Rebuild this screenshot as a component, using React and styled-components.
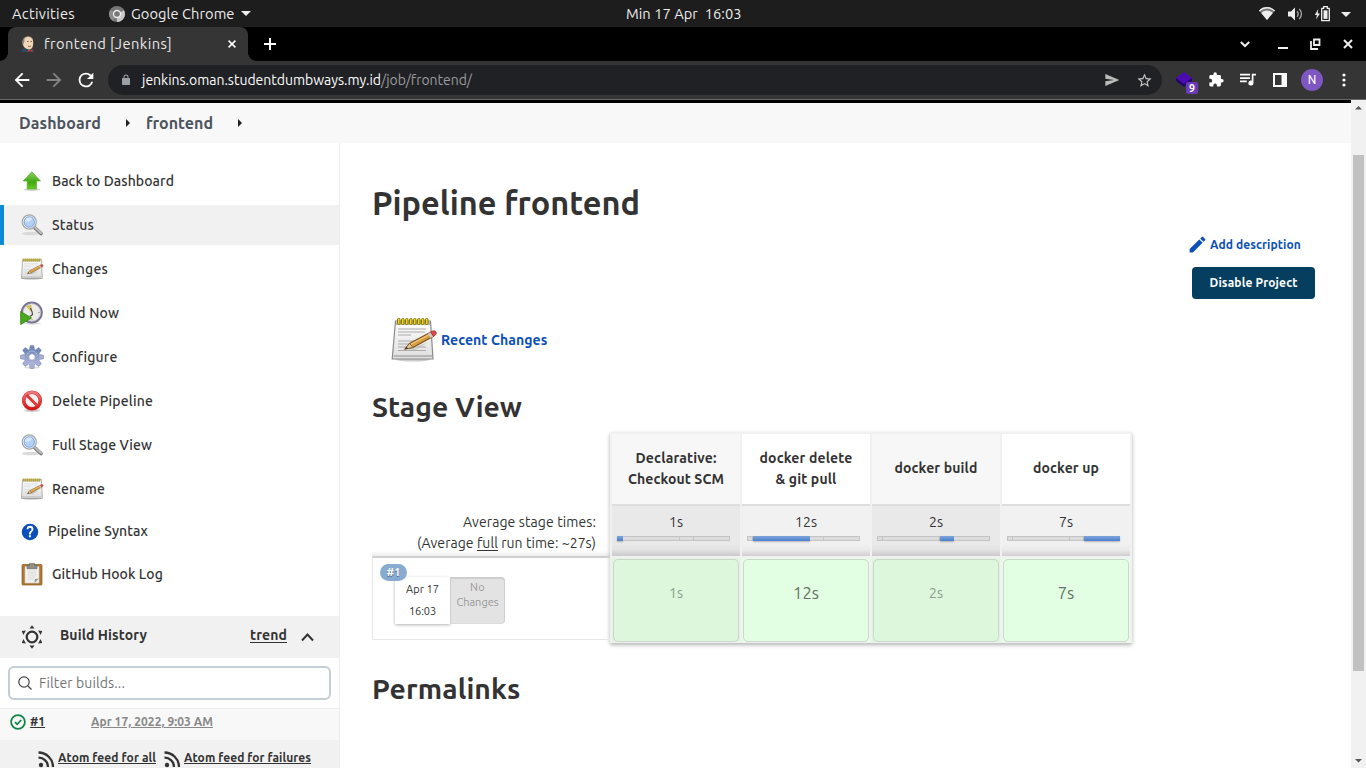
import React, { useLayoutEffect, useRef, useState } from "react";
import styled, { createGlobalStyle, css } from "styled-components";

const Global = createGlobalStyle`
  * { box-sizing: border-box; }
  body { margin: 0; background: #fff; overflow: hidden; font-family: "Ubuntu", "Noto Sans", "Open Sans", sans-serif; color: #333; }
  svg { display: block; flex: none; }
  h1, h2, p { margin: 0; }
`;

/* ---------- text fitted to a fixed measure ---------- */
const FitSpan = styled.span`
  white-space: pre;
`;

function Fit({ w, children, className }) {
  const ref = useRef(null);
  const [spacing, setSpacing] = useState(0);
  useLayoutEffect(() => {
    const el = ref.current;
    setSpacing((w - el.getBoundingClientRect().width) / el.textContent.length);
  }, [w]);
  return (
    <FitSpan ref={ref} className={className} style={{ letterSpacing: `${spacing}px` }}>
      {children}
    </FitSpan>
  );
}

/* ---------- desktop bar ---------- */
const Screen = styled.div`
  width: 1366px;
  height: 768px;
  display: flex;
  flex-direction: column;
  overflow: hidden;
`;
const DesktopBar = styled.div`
  height: 27px;
  flex: none;
  background: #1d1d1d;
  color: #ececec;
  font-size: 14.67px;
  line-height: 27px;
  display: grid;
  grid-template-columns: 626px 1fr auto;
`;
const DesktopLeft = styled.div`
  display: flex;
  align-items: center;
  padding-left: 12px;
`;
const AppMenu = styled.div`
  display: flex;
  align-items: center;
  margin-left: 34px;
  gap: 6px;
`;
const Tray = styled.div`
  display: flex;
  align-items: center;
  padding-right: 15px;
`;

/* ---------- browser chrome ---------- */
const TabStrip = styled.div`
  height: 34px;
  flex: none;
  background: #000;
  display: flex;
  padding-left: 8px;
`;
const Tab = styled.div`
  width: 240px;
  background: #353535;
  border-radius: 8px 8px 0 0;
  display: flex;
  align-items: center;
  padding: 0 12px;
  color: #e8e8e8;
  font-size: 14.67px;
  position: relative;
  &::before, &::after {
    content: "";
    position: absolute;
    bottom: 0;
    width: 8px;
    height: 8px;
  }
  &::before { left: -8px; background: radial-gradient(circle at 0 0, #000 7.5px, #353535 8px); }
  &::after { right: -8px; background: radial-gradient(circle at 100% 0, #000 7.5px, #353535 8px); }
`;
const TabTitle = styled.div`
  margin-left: 8px;
  padding-bottom: 1px;
  flex: 1;
`;
const WindowControls = styled.div`
  display: flex;
  align-items: center;
  margin-left: auto;
  padding-right: 12px;
`;
const NewTab = styled.div`
  display: flex;
  align-items: center;
  margin-left: 15px;
`;
const Toolbar = styled.div`
  height: 39px;
  flex: none;
  background: #353535;
  border-bottom: 1px solid #66686a;
  display: flex;
  align-items: center;
  padding-left: 11px;
`;
const NavButtons = styled.div`
  display: flex;
  gap: 10px;
  width: 97px;
`;
const AddressBar = styled.div`
  width: 1054px;
  height: 30px;
  border-radius: 15px;
  background: #202124;
  display: flex;
  align-items: center;
  padding: 0 9px 0 12px;
  font-size: 14px;
  color: #fff;
`;
const UrlText = styled.div`
  margin-left: 10px;
  flex: 1;
  display: flex;
`;
const UrlPath = styled.span`
  color: #9a9b9d;
`;
const BarIcons = styled.div`
  display: flex;
  gap: 16px;
`;
const Extensions = styled.div`
  display: flex;
  align-items: center;
  margin-left: 14px;
`;
const LayersExtension = styled.div`
  position: relative;
  width: 22px;
  height: 24px;
  padding-top: 2px;
`;
const ExtensionBadge = styled.span`
  position: absolute;
  left: 10px;
  top: 14px;
  width: 12px;
  height: 12px;
  border-radius: 2px;
  background: #6a3ab8;
  color: #fff;
  font-size: 10.5px;
  font-weight: 700;
  line-height: 12px;
  text-align: center;
`;
const Avatar = styled.div`
  width: 22px;
  height: 22px;
  border-radius: 50%;
  background: #7e57c2;
  color: #fff;
  font: 12px/22px Roboto, sans-serif;
  text-align: center;
  margin: 0 19px 0 14px;
`;

/* ---------- page frame ---------- */
const Viewport = styled.div`
  flex: 1;
  min-height: 0;
  display: flex;
`;
const Page = styled.div`
  width: 1351px;
  display: flex;
  flex-direction: column;
  background: #fff;
`;
const Scrollbar = styled.div`
  width: 15px;
  background: #f1f1f1;
  display: flex;
  flex-direction: column;
  align-items: center;
`;
const Thumb = styled.div`
  margin-top: 40px;
  width: 11px;
  height: 516px;
  background: #c1c1c1;
`;
const ScrollArrow = styled.svg`
  height: 15px;
  width: 15px;
  margin-top: ${(p) => (p.$last ? "auto" : 0)};
`;
const Breadcrumbs = styled.nav`
  border-top: 3px solid #000;
  height: 43px;
  flex: none;
  background: #f8f8f8;
  display: flex;
  align-items: center;
  padding-left: 19px;
  font-size: 16px;
  font-weight: 700;
  color: #4d545d;
`;
const CrumbArrow = styled.span`
  width: 0;
  height: 0;
  border: 4px solid transparent;
  border-left-color: #222;
  border-right: 0;
  margin: 0 16px 0 25px;
`;
const Columns = styled.div`
  flex: 1;
  min-height: 0;
  display: flex;
`;

/* ---------- sidebar ---------- */
const Sidebar = styled.aside`
  width: 340px;
  border-right: 1px solid #ededed;
  display: flex;
  flex-direction: column;
`;
const Tasks = styled.div`
  display: flex;
  flex-direction: column;
  gap: 4px;
  padding-top: 18px;
  height: 473px;
`;
const Task = styled.a`
  height: ${(p) => (p.$short ? 37 : 40)}px;
  flex: none;
  display: flex;
  align-items: center;
  gap: ${(p) => (p.$short ? 9 : 8)}px;
  padding-left: ${(p) => (p.$short ? 21 : 20)}px;
  font-size: 14px;
  line-height: 16px;
  font-weight: 500;
  color: #333;
  span { margin-bottom: ${(p) => (p.$short ? 2 : 0)}px; }
  ${(p) =>
    p.$active &&
    css`
      background: #f1f1f1;
      border-left: 4px solid #0b8ad6;
      padding-left: 16px;
    `}
`;
const HistoryHeader = styled.div`
  height: 42px;
  background: #f1f1f1;
  display: flex;
  align-items: center;
  padding: 0 25px 4px 20px;
  font-size: 14px;
  font-weight: 700;
  svg { margin-top: 4px; }
`;
const HistoryTitle = styled.div`
  margin-left: 16px;
  flex: 1;
`;
const TrendLink = styled.a`
  text-decoration: underline;
  text-underline-offset: 2px;
  margin-right: 14px;
`;
const FilterBox = styled.div`
  height: 34px;
  margin: 8px 8px 8px;
  border: 2px solid #c3cdd2;
  border-radius: 6px;
  display: flex;
  align-items: center;
  padding-left: 8px;
  gap: 7px;
  font-size: 14px;
  color: #757575;
`;
const BuildRow = styled.div`
  height: 32px;
  background: #f8f8f8;
  border-top: 1px solid #efefef;
  display: flex;
  align-items: center;
  padding: 0 0 6px 10px;
  font-size: 12px;
  font-weight: 700;
`;
const BuildNumber = styled.a`
  text-decoration: underline;
  margin-left: 4px;
  width: 61px;
`;
const BuildDate = styled.a`
  text-decoration: underline;
  color: #888;
`;
const Feeds = styled.div`
  flex: 1;
  background: #f1f1f1;
  display: flex;
  padding: 9px 0 0 38px;
  font-size: 12px;
  line-height: 18px;
  font-weight: 700;
`;
const Feed = styled.a`
  display: flex;
  gap: 3px;
  margin-right: 8px;
  text-decoration: underline;
  svg { margin-top: 2px; }
`;

/* ---------- main column ---------- */
const Main = styled.main`
  flex: 1;
  padding: 38px 36px 0 32px;
`;
const Title = styled.h1`
  font-size: 32.5px;
  line-height: 44px;
  font-weight: 700;
`;
const SubTitle = styled.h2`
  font-size: 28.3px;
  line-height: 38px;
  font-weight: 700;
`;
const Actions = styled.div`
  display: flex;
  flex-direction: column;
  align-items: flex-end;
  height: 91px;
  padding-top: 9px;
`;
const AddDescription = styled.a`
  display: flex;
  align-items: center;
  height: 20px;
  gap: 2px;
  margin-right: 14px;
  color: #0b4fb8;
  font-size: 12px;
  font-weight: 700;
  svg { margin-top: 1px; }
`;
const DisableButton = styled.button`
  width: 123px;
  height: 32px;
  margin-top: 13px;
  padding: 0 0 2px;
  border: 0;
  border-radius: 4px;
  background: #053e5f;
  color: #fff;
  font: 700 12px "Ubuntu", "Noto Sans", sans-serif;
`;
const RecentChanges = styled.a`
  display: flex;
  align-items: center;
  padding-left: 18px;
  height: 48px;
  gap: 3px;
  color: #0b4fb8;
  font-size: 14px;
  font-weight: 700;
`;
const StageSection = styled.section`
  margin-top: 24px;
`;
const StageView = styled.div`
  display: flex;
  margin-top: 6px;
`;
const RunColumn = styled.div`
  width: 238px;
  padding-top: 80px;
`;
const AverageText = styled.div`
  height: 44px;
  padding-right: 14px;
  text-align: right;
  font-size: 14px;
  line-height: 21px;
  background: linear-gradient(#fff 39px, #ececec);
  u { text-underline-offset: 2px; }
`;
const RunRow = styled.div`
  height: 84px;
  border: 1px solid #e8e8e8;
  border-top: 2px solid #cfcfcf;
  border-right: 0;
  position: relative;
  padding: 19px 0 0 22px;
  display: flex;
  align-items: flex-start;
`;
const RunBadge = styled.span`
  position: absolute;
  left: 7px;
  top: 6px;
  width: 27px;
  height: 17px;
  border-radius: 9px;
  background: #87abd1;
  color: #fff;
  font-size: 11px;
  font-weight: 700;
  line-height: 17px;
  text-align: center;
  text-shadow: 0 1px 1px rgba(0, 0, 0, 0.45);
`;
const RunDate = styled.div`
  width: 55px;
  height: 47px;
  background: #fff;
  box-shadow: 0 1px 3px rgba(0, 0, 0, 0.3);
  font-size: 11px;
  line-height: 22px;
  padding-top: 1px;
  text-align: center;
`;
const NoChanges = styled.div`
  width: 55px;
  height: 47px;
  background: #e3e3e3;
  border: 1px solid #cecece;
  border-top-width: 2px;
  border-bottom-color: #dcdcdc;
  border-radius: 0 4px 4px 0;
  color: #999;
  font-size: 11px;
  line-height: 15px;
  padding-top: 1px;
  text-align: center;
`;
const StagePanel = styled.div`
  width: 522px;
  height: 211px;
  padding: 1px;
  background: #f1f1f1;
  box-shadow: 0 2px 4px rgba(0, 0, 0, 0.3);
  display: flex;
`;
const Stage = styled.div`
  width: 130px;
  padding: 1px 1px 0;
  display: flex;
  flex-direction: column;
`;
const StageName = styled.div`
  height: 70px;
  background: ${(p) => (p.$odd ? "#f7f7f7" : "#fff")};
  display: flex;
  flex-direction: column;
  align-items: center;
  justify-content: center;
  font-size: 14px;
  line-height: 21px;
  font-weight: 700;
  padding-bottom: 1px;
`;
const StageAverage = styled.div`
  height: 52px;
  border-top: 2px solid #dedede;
  background: ${(p) =>
    p.$odd
      ? "linear-gradient(#e9e9e9 38px, #e2e2e2 44px, #c9c9c9)"
      : "linear-gradient(#f1f1f1 38px, #eaeaea 44px, #cfcfcf)"};
  font-size: 14px;
  line-height: 20px;
  padding: 6px 10px 0 5px;
  text-align: center;
`;
const StageAverageTime = styled.div`
  padding-left: 5px;
`;
const Track = styled.div`
  height: 5px;
  margin-top: 4px;
  width: 113px;
  display: flex;
`;
const Segment = styled.span`
  width: ${(p) => p.$width}px;
  background: ${(p) => (p.$on ? "linear-gradient(#7fa5d8, #4a7fd0)" : "#dcdcdc")};
  border: ${(p) => (p.$on ? 0 : 1)}px solid #c4c4c4;
  border-left-width: ${(p) => (p.$on || !p.$first ? 0 : 1)}px;
  box-shadow: ${(p) => (p.$on ? "0 1px 2px rgba(0,0,0,.25)" : "none")};
`;
const StageCell = styled.div`
  margin-top: 2px;
  height: 84px;
  padding: 1px;
  background: ${(p) => (p.$odd ? "#e2f3e2" : "#e9fbe9")};
`;
const StageResult = styled.div`
  height: 83px;
  border: 1px solid #ccd6cc;
  border-radius: 5px;
  background: ${(p) => (p.$odd ? "#ddf7dd" : "#e3ffe3")};
  color: ${(p) => (p.$odd ? "#8b9c8b" : "#667366")};
  font-size: ${(p) => (p.$odd ? 14 : 16.6)}px;
  line-height: 66px;
  text-align: center;
`;
const Permalinks = styled.section`
  margin-top: 27px;
`;

/* ---------- icons ---------- */
const ChromeIcon = () => (
  <svg width="16" height="16" viewBox="0 0 16 16">
    <circle cx="8" cy="8" r="8" fill="#777" />
    <path d="M8 8 15 4.2A8 8 0 0 1 8 16Z" fill="#c9c9c9" />
    <path d="M8 8 4 15A8 8 0 0 1 1.1 4Z" fill="#8c8c8c" />
    <circle cx="8" cy="8" r="4.2" fill="#eee" />
    <circle cx="8" cy="8" r="2.8" fill="#777" />
  </svg>
);
const Caret = ({ w = 10 }) => (
  <svg width={w} height="5" viewBox="0 0 10 5"><path d="M0 0h10L5 5Z" fill="#eee" /></svg>
);
const JenkinsIcon = () => (
  <svg width="16" height="17" viewBox="0 0 16 17">
    <path d="M1 16c0-2.400 2-4 5-4l5 .500c2 .500 3 2 3 3.500Z" fill="#2d4a5e" />
    <path d="M4 11C2 8 2 4 4.500 2 7 0 11 .5 12.500 3c1 2 1 7-.5 9-1.500 2-5 2-8-1Z" fill="#f0d6b7" />
    <path d="M3 9C1.500 6 2.500 2.500 5 1.200 3.800 3.500 5 5 4 6.500Z" fill="#8d8176" />
    <path d="M4.500 2C7-.4 11 .2 12.500 3" fill="none" stroke="#a08f7c" strokeWidth=".7" />
    <path d="M7 5.500h1.500M10.500 5.500H12M8 10c1 .7 2 .7 3 0" stroke="#6b503f" fill="none" strokeWidth=".9" />
    <path d="m8 13.300 2.300 1.100 2.200-1.200v2.700l-2.200-1-2.300 1Z" fill="#d33833" />
  </svg>
);
const CloseIcon = ({ s = 8 }) => (
  <svg width={s} height={s} viewBox="0 0 8 8"><path d="m.6.600 6.800 6.800m0-6.800L.6 7.400" stroke="#fff" strokeWidth="1.600" /></svg>
);
const Material = ({ size = 21, color = "#fff", d }) => (
  <svg width={size} height={size} viewBox="0 0 24 24"><path d={d} fill={color} /></svg>
);
const P = {
  back: "M20 11H7.830l5.590-5.590L12 4l-8 8 8 8 1.410-1.410L7.830 13H20v-2z",
  forward: "M12 4l-1.410 1.410L16.170 11H4v2h12.170l-5.580 5.590L12 20l8-8z",
  reload: "M17.650 6.350A7.960 7.960 0 0 0 12 4a8 8 0 1 0 7.730 10h-2.080A6 6 0 1 1 12 6c1.660 0 3.140.690 4.220 1.780L13 11h7V4z",
  lock: "M18 8h-1V6A5 5 0 0 0 7 6v2H6c-1.100 0-2 .9-2 2v10c0 1.100.9 2 2 2h12c1.100 0 2-.9 2-2V10c0-1.100-.9-2-2-2zM9 6a3 3 0 0 1 6 0v2H9V6z",
  send: "M2 21 23 12 2 3v7l13 2-13 2z",
  star: "M22 9.240l-7.190-.620L12 2 9.190 8.630 2 9.240l5.460 4.730L5.820 21 12 17.270 18.180 21l-1.630-7.030L22 9.240zM12 15.400l-3.760 2.270 1-4.280-3.320-2.880 4.380-.380L12 6.100l1.710 4.040 4.380.380-3.320 2.880 1 4.280L12 15.400z",
  puzzle: "M20.500 11H19V7c0-1.100-.9-2-2-2h-4V3.500a2.500 2.500 0 0 0-5 0V5H4c-1.100 0-2 .9-2 2v3.800h1.500a2.700 2.700 0 0 1 0 5.400H2V20c0 1.100.9 2 2 2h3.800v-1.500a2.700 2.700 0 0 1 5.400 0V22H17c1.100 0 2-.9 2-2v-4h1.500a2.500 2.500 0 0 0 0-5z",
  queue: "M15 6H3v2h12V6zm0 4H3v2h12v-2zM3 16h8v-2H3v2zM17 6v8.180A3 3 0 1 0 19 17V8h3V6h-5z",
  pencil: "M3 17.250V21h3.750L17.810 9.940l-3.750-3.750L3 17.250zM20.710 7.040a1 1 0 0 0 0-1.410l-2.340-2.340a1 1 0 0 0-1.410 0l-1.830 1.830 3.750 3.750 1.830-1.830z",
};
const LayersIcon = () => (
  <svg width="16" height="18" viewBox="0 0 16 18">
    <path d="m0 11 8 6 8-6V8H0Z" fill="#20066b" />
    <path d="m0 8 8-6 8 6-8 6Z" fill="#4b0bb0" />
  </svg>
);
const ArrowUpIcon = () => (
  <svg width="24" height="24" viewBox="0 0 24 24">
    <defs><linearGradient id="up" x2="0" y2="1"><stop stopColor="#8cce62" /><stop offset=".6" stopColor="#42a812" /><stop offset="1" stopColor="#63cc20" /></linearGradient></defs>
    <ellipse cx="12" cy="20.500" rx="8.500" ry="1.500" fill="#d4d4d4" />
    <path d="M11.800 2.700 20.500 12H16.500v8H7.200V12H3.200Z" fill="url(#up)" stroke="#5fae3d" strokeWidth=".7" />
  </svg>
);
const SearchIcon = () => (
  <svg width="24" height="24" viewBox="0 0 24 24">
    <ellipse cx="11" cy="20.500" rx="9" ry="1.700" fill="#dadada" />
    <path d="m14.500 14.500 6.500 6" stroke="#777" strokeWidth="3.600" strokeLinecap="round" />
    <path d="m15 14.500 6 5.600" stroke="#bdbdbd" strokeWidth="2" strokeLinecap="round" />
    <circle cx="9.300" cy="9" r="7" fill="#b4d0f4" stroke="#a8a8a8" strokeWidth="1.300" />
    <circle cx="9.300" cy="9" r="5.900" fill="none" stroke="#f0f0f0" strokeWidth="1" />
    <path d="M4.700 8.500a4.600 4.600 0 0 1 7.500-3.600C11 8 8 9.500 4.700 8.500Z" fill="#d9e8fb" />
    <circle cx="9.300" cy="9" r="5.200" fill="none" stroke="#6f9cdb" strokeWidth=".8" />
  </svg>
);
const NotepadIcon = ({ size = 24, fine }) => (
  <svg width={size} height={size} viewBox="0 0 48 48">
    <defs><linearGradient id="paper" x2="0" y2="1"><stop stopColor="#fdfdfd" /><stop offset="1" stopColor="#dedede" /></linearGradient></defs>
    <ellipse cx="23" cy="43.500" rx="17" ry="2" fill="#ccc" />
    <path d={fine ? "M5.500 5h35l2.500 38H2.200Z" : "M5 5h38l1.500 38H3Z"} fill="url(#paper)" stroke="#8a8a86" strokeWidth={fine ? 1.200 : 1.300} />
    <path d="M4 40h38" stroke="#aaa" strokeWidth="1.500" />
    <path d="M6.300 5.500h33.500l.3 3.500H6Z" fill="#b6b6ae" />
    {fine
      ? Array.from({ length: 8 }, (_, i) => <rect key={i} x={7.500 + i * 4} y="2.500" width="2.500" height="6" rx="1" fill="#f1d622" stroke="#85740c" />)
      : <path d="M6 6h36" stroke="#b9a736" strokeWidth="6" strokeDasharray="3 1" />}
    <path d="M8 13h28M8 16h27M8 19h13M8 25h20M8 28h14M8 31h9M27 31h9M8 34.500h28" stroke={fine ? "#aaa" : "#d6d6d6"} />
    <path d="m17 33 7-1.500 14-5-13 8Z" fill="#bbb" opacity=".6" />
    <path d="m15 33 4.500-5.500L41 16l2.500 4.200L23 31.500Z" fill="#d79c42" stroke="#76511c" strokeWidth="1.100" />
    <path d="M20.500 28.500 41 17.600" stroke="#f0c77a" strokeWidth="1.200" />
    <path d="m15 33 4.500-5.500 3.500 4Z" fill="#e8cf9e" stroke="#76511c" strokeWidth=".8" />
    <path d="m15 33 1.700-2 1.300 1.400Z" fill="#222" />
    <path d="m38 17.500 3-1.600 2.500 4.400-3 1.600Z" fill="#c9c9c9" />
    <path d="M40.700 16c2.500-1.600 4.500-1.600 5.300 0 .8 1.500 0 3-2.600 4.400Z" fill="#e24a43" stroke="#a32720" strokeWidth=".7" />
  </svg>
);
const ClockIcon = () => (
  <svg width="24" height="24" viewBox="0 0 24 24">
    <ellipse cx="12" cy="22.500" rx="9" ry="1.200" fill="#ddd" />
    <circle cx="11.800" cy="11.500" r="10" fill="#ebebe8" stroke="#77758f" strokeWidth="2" />
    <circle cx="11.800" cy="11.500" r="8.700" fill="none" stroke="#b8b8c5" strokeWidth=".6" />
    <path d="M11.500 11.500 6 5.200a8.500 8.500 0 0 1 5.500-1Z" fill="#d8c35e" />
    <path d="m10.500 7 1.500 3.500.5 3-2.500 2" stroke="#444" strokeWidth="1.100" fill="none" />
    <path d="M18.200 11.500h1.500M12 18v1.500" stroke="#999" />
    <path d="M.7 10.500v13L11.500 17Z" fill="#49aa1d" stroke="#2f7d0d" strokeWidth=".8" />
  </svg>
);
const GearIcon = () => (
  <svg width="24" height="24" viewBox="0 0 24 24">
    <defs><linearGradient id="gear" x2="0" y2="1"><stop stopColor="#6f87b5" /><stop offset="1" stopColor="#b3b5dc" /></linearGradient></defs>
    <ellipse cx="12" cy="22.500" rx="8" ry="1.200" fill="#ddd" />
    {[0, 45, 90, 135, 180, 225, 270, 315].map((a) => (
      <path key={a} d="M10.200.500h3.600l1 5.500H9.200Z" fill={a > 45 && a < 315 ? "#a7aed6" : "#7389b7"} stroke="#7280a8" strokeWidth=".5" transform={`rotate(${a} 12 12)`} />
    ))}
    <circle cx="12" cy="12" r="7.400" fill="url(#gear)" />
    <circle cx="12" cy="12" r="3.200" fill="#fff" stroke="#9aa5c8" strokeWidth=".8" />
    <path d="M6.500 11.500a5.500 5.500 0 0 1 11 0" stroke="#a4b3d5" fill="none" />
  </svg>
);
const ForbiddenIcon = () => (
  <svg width="24" height="24" viewBox="0 0 24 24">
    <defs><linearGradient id="no" x2="0" y2="1"><stop stopColor="#f07878" /><stop offset="1" stopColor="#d41414" /></linearGradient></defs>
    <ellipse cx="12" cy="21.500" rx="8" ry="1.500" fill="#ccc" />
    <circle cx="12" cy="11.500" r="8.300" fill="#f5f0f0" stroke="#c93a3a" strokeWidth="3.600" />
    <circle cx="12" cy="11.500" r="8.300" fill="none" stroke="url(#no)" strokeWidth="2.800" />
    <path d="m6.500 6 11 11" stroke="#de3a3a" strokeWidth="3" />
  </svg>
);
const HelpIcon = () => (
  <svg width="18" height="18" viewBox="0 0 24 24">
    <path d="M12 1a11 11 0 1 0 0 22 11 11 0 0 0 0-22zm1.200 18h-2.600v-2.600h2.600zm2.400-8.200-1.100 1.100c-.9.900-1.300 1.600-1.300 3.300h-2.600v-.6c0-1.200.5-2.300 1.300-3.200l1.500-1.500c.4-.4.700-1 .7-1.600a2.100 2.100 0 0 0-4.200 0H7.500a4.500 4.500 0 0 1 9 0c0 1-.4 1.900-.9 2.500z" fill="#0b4fb8" />
  </svg>
);
const ClipboardIcon = () => (
  <svg width="24" height="24" viewBox="0 0 24 24">
    <rect x="2" y="2.500" width="20" height="20.500" rx="1" fill="#b07832" stroke="#8e5c1d" strokeWidth=".7" />
    <path d="M5 4.500h14V21H5Z" fill="#f1f1ef" stroke="#ccc" strokeWidth=".6" />
    <path d="M7.500 9h9M7.500 11h9M7.500 13h9M7.500 15h8M7.500 17h6" stroke="#dbdbd9" />
    <path d="m14.500 21 4.500-4.500-4.200.4Z" fill="#999" />
    <path d="M7 3.500h2.500V1.500h5v2H17v3.200H7Z" fill="#8e918b" stroke="#61645f" strokeWidth=".6" />
  </svg>
);
const WeatherIcon = () => (
  <svg width="24" height="24" viewBox="0 0 24 24" fill="#333">
    <circle cx="12" cy="12" r="5.300" fill="none" stroke="#333" strokeWidth="2.200" />
    {[0, 60, 120, 180, 240, 300].map((a) => <path key={a} d="m12 .2 2.500 3.300h-5Z" transform={`rotate(${a} 12 12)`} />)}
  </svg>
);
const FeedIcon = () => (
  <svg width="17" height="17" viewBox="0 0 17 17" fill="none" stroke="#333" strokeWidth="2.300">
    <circle cx="3" cy="14" r="2.200" fill="#333" stroke="none" />
    <path d="M.5 6.700A9.300 9.300 0 0 1 10 16M.5 1.500a14.500 14.500 0 0 1 14.500 14.500" />
  </svg>
);
const SuccessIcon = () => (
  <svg width="16" height="16" viewBox="0 0 16 16" fill="none" stroke="#138347">
    <circle cx="8" cy="8" r="6.900" strokeWidth="1.800" />
    <path d="m5 8.200 2.200 2.100L11.200 6" strokeWidth="1.800" />
  </svg>
);

const tasks = [
  ["Back to Dashboard", 122, ArrowUpIcon],
  ["Status", 42, SearchIcon],
  ["Changes", 56, NotepadIcon],
  ["Build Now", 67, ClockIcon],
  ["Configure", 65, GearIcon],
  ["Delete Pipeline", 101, ForbiddenIcon],
  ["Full Stage View", 100, SearchIcon],
  ["Rename", 53, NotepadIcon],
  ["Pipeline Syntax", 100, HelpIcon],
  ["GitHub Hook Log", 111, ClipboardIcon],
];

const stages = [
  { name: [["Declarative:", 81], ["Checkout SCM", 96]], time: "1s" },
  { name: [["docker delete", 93], ["& git pull", 61]], time: "12s" },
  { name: [["docker build", 83]], time: "2s" },
  { name: [["docker up", 66]], time: "7s" },
];
const segmentWidths = [6, 57, 14, 36];

export default function App() {
  return (
    <Screen>
      <Global />
      <DesktopBar>
        <DesktopLeft>
          <Fit w={63}>Activities</Fit>
          <AppMenu><ChromeIcon /><Fit w={103.5}>Google Chrome</Fit><Caret /></AppMenu>
        </DesktopLeft>
        <div><Fit w={115.5}>Min 17 Apr  16:03</Fit></div>
        <Tray>
          <svg width="92" height="20" viewBox="0 0 92 20" fill="#eee">
            <path d="M0 6.500a11 11 0 0 1 16 0L8 16Z" fill="#777" /><path d="M2.200 9a8 8 0 0 1 11.600 0L8 16Z" />
            <path d="M0 6.500a11 11 0 0 1 16 0l-.8 1a10.300 10.300 0 0 0-14.400 0Z" />
            <path d="M29 7.500h3l4-4v13l-4-4h-3Z" /><path d="M38 7.300a4 4 0 0 1 0 5.400M40.300 5a7 7 0 0 1 0 10" fill="none" stroke="#aaa" strokeWidth="1.300" />
            <path d="m59.300 5-3.500 6h2.200l-1 4.500 4-6h-2.300Z" />
            <path d="M62.700 4.300h2V2.700h3.600v1.600h2v12.400h-7.600Z" fill="none" stroke="#eee" strokeWidth="1.300" /><path d="M64.500 6.300h4v8.600h-4Z" />
            <path d="M82 8h10l-5 5Z" />
          </svg>
        </Tray>
      </DesktopBar>

      <TabStrip>
        <Tab><JenkinsIcon /><TabTitle><Fit w={128}>frontend [Jenkins]</Fit></TabTitle><CloseIcon /></Tab>
        <NewTab><svg width="14" height="14" viewBox="0 0 14 14"><path d="M7 1v12M1 7h12" stroke="#fff" strokeWidth="2" /></svg></NewTab>
        <WindowControls>
          <svg width="114" height="14" viewBox="0 0 114 14" fill="none" stroke="#eee" strokeWidth="1.800">
            <path d="m.8 5 4.200 4 4.200-4M38 11h10" strokeWidth="2" />
            <path d="M74 2.500h5.500v5.500h-5.500ZM71 4v8h7" />
            <path d="m104 3 8 8m0-8-8 8" strokeWidth="2" />
          </svg>
        </WindowControls>
      </TabStrip>

      <Toolbar>
        <NavButtons>
          <Material size={22} d={P.back} />
          <Material size={22} color="#858585" d={P.forward} />
          <Material size={22} d={P.reload} />
        </NavButtons>
        <AddressBar>
          <Material size={12} color="#9aa0a6" d={P.lock} />
          <UrlText><Fit w={239}>jenkins.oman.studentdumbways.my.id</Fit><UrlPath><Fit w={91}>/job/frontend/</Fit></UrlPath></UrlText>
          <BarIcons><Material size={16} color="#bbb" d={P.send} /><Material size={17} color="#c4c4c4" d={P.star} /></BarIcons>
        </AddressBar>
        <Extensions>
          <LayersExtension><LayersIcon /><ExtensionBadge>9</ExtensionBadge></LayersExtension>
          <svg width="89" height="20" viewBox="0 0 89 20">
            <g transform="translate(10 1.500) scale(.68)"><path d={P.puzzle} fill="#fff" /></g>
            <g transform="translate(39.500 -1.200) scale(.84)"><path d={P.queue} fill="#fff" /></g>
            <path d="M76 4h12v12H76Z" fill="none" stroke="#fff" strokeWidth="2" /><path d="M83.500 3h5.500v14h-5.500Z" fill="#fff" />
          </svg>
          <Avatar>N</Avatar>
          <svg width="4" height="14" viewBox="0 0 4 14" fill="#fff"><circle cx="2" cy="2" r="1.600" /><circle cx="2" cy="7" r="1.600" /><circle cx="2" cy="12" r="1.600" /></svg>
        </Extensions>
      </Toolbar>

      <Viewport>
        <Page>
          <Breadcrumbs>
            <Fit w={82}>Dashboard</Fit><CrumbArrow /><Fit w={67}>frontend</Fit><CrumbArrow />
          </Breadcrumbs>
          <Columns>
            <Sidebar>
              <Tasks>
                {tasks.map(([label, w, Icon]) => (
                  <Task key={label} $active={label === "Status"} $short={label === "Pipeline Syntax"}>
                    <Icon /><Fit w={w}>{label}</Fit>
                  </Task>
                ))}
              </Tasks>
              <HistoryHeader>
                <WeatherIcon />
                <HistoryTitle><Fit w={87}>Build History</Fit></HistoryTitle>
                <TrendLink><Fit w={37}>trend</Fit></TrendLink>
                <svg width="13" height="12" viewBox="0 0 13 12"><path d="m1 9.500 5.500-6 5.500 6" fill="none" stroke="#333" strokeWidth="2" /></svg>
              </HistoryHeader>
              <FilterBox>
                <svg width="14" height="14" viewBox="0 0 14 14" fill="none" stroke="#444" strokeWidth="1.200"><circle cx="6" cy="6" r="5.200" /><path d="m10 10 3.500 3.500" /></svg>
                <Fit w={86}>Filter builds...</Fit>
              </FilterBox>
              <BuildRow>
                <SuccessIcon /><BuildNumber><Fit w={15}>#1</Fit></BuildNumber><BuildDate><Fit w={122}>Apr 17, 2022, 9:03 AM</Fit></BuildDate>
              </BuildRow>
              <Feeds>
                <Feed><FeedIcon /><Fit w={98}>Atom feed for all</Fit></Feed>
                <Feed><FeedIcon /><Fit w={127}>Atom feed for failures</Fit></Feed>
              </Feeds>
            </Sidebar>
            <Main>
              <Title><Fit w={268}>Pipeline frontend</Fit></Title>
              <Actions>
                <AddDescription><Material color="#0b4fb8" d={P.pencil} /><Fit w={91}>Add description</Fit></AddDescription>
                <DisableButton><Fit w={88}>Disable Project</Fit></DisableButton>
              </Actions>
              <RecentChanges><NotepadIcon size={48} fine /><Fit w={106.5}>Recent Changes</Fit></RecentChanges>
              <StageSection>
                <SubTitle><Fit w={150}>Stage View</Fit></SubTitle>
                <StageView>
                  <RunColumn>
                    <AverageText>
                      <Fit w={133}>Average stage times:</Fit><br />
                      <Fit w={179}>(Average <u>full</u> run time: ~27s)</Fit>
                    </AverageText>
                    <RunRow>
                      <RunDate><Fit w={33}>Apr 17</Fit><br /><Fit w={27}>16:03</Fit></RunDate>
                      <NoChanges><Fit w={15}>No</Fit><br /><Fit w={42}>Changes</Fit></NoChanges>
                      <RunBadge>#1</RunBadge>
                    </RunRow>
                  </RunColumn>
                  <StagePanel>
                    {stages.map((s, i) => {
                      const odd = i % 2 === 0;
                      return (
                        <Stage key={s.time}>
                          <StageName $odd={odd}>{s.name.map(([t, w]) => <Fit key={t} w={w}>{t}</Fit>)}</StageName>
                          <StageAverage $odd={odd}>
                            <StageAverageTime><Fit w={s.time.length === 3 ? 22 : 14}>{s.time}</Fit></StageAverageTime>
                            <Track>{segmentWidths.map((w, j) => <Segment key={j} $width={w} $on={j === i} $first={j === 0} />)}</Track>
                          </StageAverage>
                          <StageCell $odd={odd}><StageResult $odd={odd}>{s.time}</StageResult></StageCell>
                        </Stage>
                      );
                    })}
                  </StagePanel>
                </StageView>
              </StageSection>
              <Permalinks><SubTitle><Fit w={148.5}>Permalinks</Fit></SubTitle></Permalinks>
            </Main>
          </Columns>
        </Page>
        <Scrollbar>
          <ScrollArrow viewBox="0 0 15 15"><path d="M4 9.500h7L7.500 6Z" fill="#555" /></ScrollArrow>
          <Thumb />
          <ScrollArrow $last viewBox="0 0 15 15"><path d="M4 6h7L7.500 9.500Z" fill="#555" /></ScrollArrow>
        </Scrollbar>
      </Viewport>
    </Screen>
  );
}
